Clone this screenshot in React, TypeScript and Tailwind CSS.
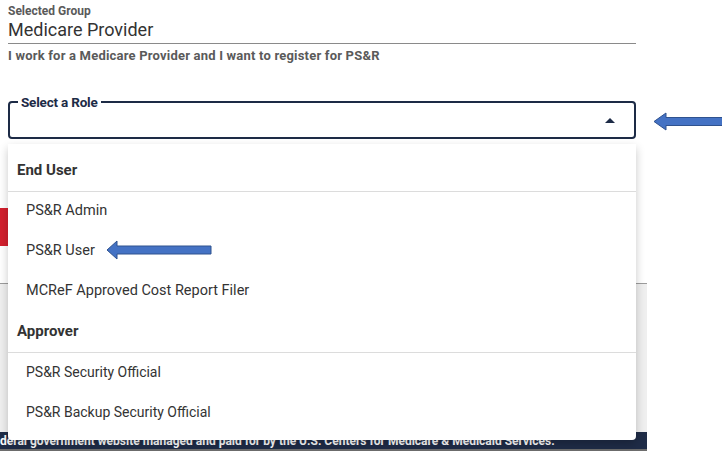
export default function App() {
  const groups = [
    {
      name: "End User",
      size: "text-[14.5px]",
      roles: ["PS&R Admin", "PS&R User", "MCReF Approved Cost Report Filer"],
    },
    {
      name: "Approver",
      size: "text-[14px]",
      roles: ["PS&R Security Official", "PS&R Backup Security Official"],
    },
  ]

  return (
    <div className="relative w-[722px] h-[451px] overflow-hidden bg-white font-['Roboto',sans-serif]">
      {/* Selected group */}
      <div className="w-[636px] h-[283px] pl-2 pt-[3px]">
        <div className="text-[12px] leading-4 font-bold text-[#5a5a5a]">Selected Group</div>
        <div className="text-[18px] leading-[22px] text-[#333] border-b border-[#8a8a8a] pb-[2px]">
          Medicare Provider
        </div>
        <div className="mt-[4px] text-[13px] leading-4 font-bold text-[#5a5a5a] tracking-[0.2px]">
          I work for a Medicare Provider and I want to register for PS&amp;R
        </div>

        {/* Select a Role field */}
        <fieldset className="mt-[30px] h-[45px] border-2 border-[#1d2b46] rounded-[4px] px-[8px] relative">
          <legend className="px-[3px] text-[13.5px] leading-4 font-bold text-[#1d2b46] tracking-[-0.2px]">Select a Role</legend>
          <div className="absolute right-[19px] top-[8px] w-0 h-0 border-l-[5px] border-r-[5px] border-b-[5px] border-l-transparent border-r-transparent border-b-[#1d2b46]"></div>
        </fieldset>

        {/* Button partly hidden under the menu */}
        <div className="mt-[69px] -ml-[30px] w-[120px] h-[38px] rounded-[4px] bg-[#d21f2d]"></div>
      </div>

      {/* Gray page area */}
      <div className="w-[647px] h-[149px] bg-[#efefef] border-t border-[#9c9c9c]"></div>

      {/* Footer */}
      <div className="w-[647px] h-[17px] bg-[#1f2c47] text-white text-[12px] leading-[19px] font-bold whitespace-nowrap overflow-hidden">
        deral government website managed and paid for by the U.S. Centers for Medicare &amp; Medicaid Services.
      </div>
      <div className="w-[647px] h-[2px] bg-[#6d6d6d]"></div>

      {/* Dropdown menu */}
      <div className="absolute left-2 top-[144px] w-[628px] h-[296px] pt-[7px] bg-white rounded-b-[4px] shadow-[0_4px_10px_rgba(0,0,0,0.22)] text-[#333]">
        {groups.map((group) => (
          <div key={group.name}>
            <div className="h-[41px] pt-[10px] pl-[9px] text-[15px] leading-[18px] font-bold border-b border-[#dcdcdc]">
              {group.name}
            </div>
            {group.roles.map((role) => (
              <div key={role} className={`h-[40px] pl-[18px] pt-[10px] leading-[18px] ${group.size}`}>
                {role}
              </div>
            ))}
          </div>
        ))}
      </div>

      {/* Annotation arrows */}
      <svg className="absolute left-[653px] top-[112px]" width="70" height="19" viewBox="0 0 70 19">
        <path d="M1 9.5 L13 1 L13 5.5 L70 5.5 L70 13.5 L13 13.5 L13 18 Z" fill="#4472c4" stroke="#2f528f" strokeWidth="1" />
      </svg>
      <svg className="absolute left-[106px] top-[240px]" width="107" height="20" viewBox="0 0 107 20">
        <path d="M1 10 L11 1 L11 6 L105 6 L105 14 L11 14 L11 19 Z" fill="#4472c4" stroke="#2f528f" strokeWidth="1" />
      </svg>
    </div>
  )
}
